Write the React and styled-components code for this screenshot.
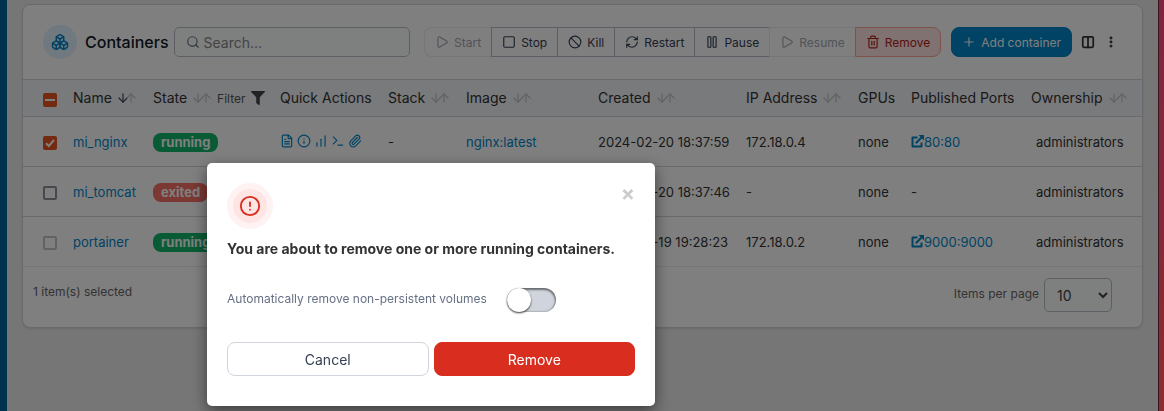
import React, { useState } from "react";
import styled, { createGlobalStyle, css } from "styled-components";
import {
  ArrowDown,
  ArrowUp,
  Ban,
  Boxes,
  ChartNoAxesColumnIncreasing,
  CircleAlert,
  Columns2,
  EllipsisVertical,
  FileText,
  Info,
  Paperclip,
  Pause,
  Play,
  Plus,
  RefreshCw,
  Search,
  Square,
  Terminal,
  Trash2,
} from "lucide-react";
import { FaFilter } from "react-icons/fa";

const GlobalStyle = createGlobalStyle`
  *, *::before, *::after { box-sizing: border-box; }
  body {
    margin: 0;
    background: #ececec;
    color: #333;
    font-family: Inter, "Liberation Sans", sans-serif;
    font-size: 13px;
    line-height: 20px;
  }
  button, input, select { font-family: inherit; }
  a { color: #0086c9; text-decoration: none; }
`;

const Page = styled.div`
  display: flex;
  min-height: 100vh;
`;

const Sidebar = styled.aside`
  flex: none;
  width: 7px;
  background: #006296;
`;

const Desktop = styled.div`
  position: relative;
  z-index: 2;
  flex: none;
  width: 6px;
  border-left: 1px solid #3c1420;
  background: linear-gradient(#7e2440, #8c2c30);
`;

const Main = styled.main`
  flex: 1;
  min-width: 0;
  padding: 4px 15px;
`;

const Card = styled.section`
  overflow: hidden;
  background: #fff;
  border: 1px solid #d0d5dd;
  border-radius: 8px;
  box-shadow: 0 1px 2px rgba(16, 24, 40, 0.1);
`;

const Toolbar = styled.header`
  display: flex;
  align-items: center;
  height: 74px;
  padding: 0 24px 0 20px;
`;

const TitleIcon = styled.span`
  display: flex;
  align-items: center;
  justify-content: center;
  width: 34px;
  height: 34px;
  margin-right: 8px;
  border-radius: 50%;
  background: #e0f2fe;
  color: #0086c9;
`;

const Title = styled.h1`
  margin: 0 5px 0 0;
  color: #101828;
  font-size: 16px;
  font-weight: 500;
`;

const SearchBox = styled.label`
  display: flex;
  flex: 1;
  align-items: center;
  gap: 4px;
  min-width: 0;
  height: 30px;
  padding: 0 11px;
  border: 1px solid #b8bec8;
  border-radius: 5px;
  background: #fcfffe;
  color: #667085;

  input {
    flex: 1;
    min-width: 0;
    padding: 0;
    border: 0;
    background: none;
    font-size: 14px;
    outline: 0;
  }
  input::placeholder { color: #888; opacity: 1; }
`;

const ButtonGroup = styled.div`
  display: flex;
  margin: 0 10px 0 14px;
`;

const Button = styled.button`
  display: flex;
  align-items: center;
  justify-content: center;
  gap: 5px;
  height: 30px;
  padding: 0 10px;
  border: 1px solid #d0d5dd;
  border-radius: 8px;
  background: #fff;
  color: #344054;
  font-size: 12px;
  white-space: nowrap;

  ${(p) => p.$tone === "primary" && css`
    border-color: #0086c9;
    background: #0086c9;
    color: #fff;
  `}
  ${(p) => p.$tone === "danger" && css`
    border-color: #fda29b;
    background: #fee4e2;
    color: #b42318;
  `}
`;

const GroupButton = styled(Button)`
  border-right-width: 0;
  border-radius: 0;
  border-color: ${(p) => (p.$tone ? "#fda29b" : p.disabled ? "#eaecf0" : "#b4bac6")};
  color: ${(p) => (p.$tone ? "#b42318" : p.disabled ? "#a3a8b2" : "#344054")};

  &:not(:disabled) + &:disabled { border-left-color: #b4bac6; }
  &:first-child { border-radius: 8px 0 0 8px; }
  &:last-child {
    border-right-width: 1px;
    border-radius: 0 8px 8px 0;
  }
`;

const IconButton = styled.button`
  display: flex;
  margin-left: 9px;
  padding: 0;
  border: 0;
  background: none;
  color: #333;
`;

const Table = styled.table`
  width: 100%;
  table-layout: fixed;
  border-collapse: collapse;

  th, td {
    padding: 0 0 0 10px;
    border-top: 1px solid #d0d5dd;
    text-align: left;
    vertical-align: middle;
    white-space: nowrap;
  }
  th:first-child, td:first-child { padding-left: 20px; }
  td:last-child { padding-left: 15px; }
  th {
    height: 37px;
    background: #f2f4f7;
    font-size: 14px;
    font-weight: 400;
  }
  td { height: 50px; }
  tbody { border-bottom: 1px solid #eaecf0; }
`;

const Head = styled.span`
  display: flex;
  align-items: center;
  gap: 4px;
`;

const SortArrows = styled.span`
  display: flex;
  color: #bfc2c8;

  svg + svg { margin-left: -6px; }
  svg:first-child { color: ${(p) => (p.$active ? "#344054" : "inherit")}; }
`;

const FilterButton = styled.button`
  display: flex;
  align-items: center;
  gap: 5px;
  padding: 0;
  border: 0;
  background: none;
  color: #555;
  font-size: 12px;

  svg { color: #444; }
`;

const Checkbox = styled.input`
  appearance: none;
  display: block;
  width: 14px;
  height: 14px;
  margin: 3px 0 0;
  border: 2px solid ${(p) => (p.disabled ? "#c4c4ca" : "#8f8f9d")};
  border-radius: 2px;
  background: center / 14px no-repeat;

  ${(p) => p.$mark && css`
    border: 0;
    background-color: #e95420;
    background-image: ${p.$mark === "dash"
      ? "linear-gradient(#fff, #fff)"
      : `url("data:image/svg+xml,%3Csvg xmlns='http://www.w3.org/2000/svg' viewBox='0 0 14 14'%3E%3Cpath d='M3 7.2l2.8 2.8L11 4' fill='none' stroke='white' stroke-width='2'/%3E%3C/svg%3E")`};
    background-size: ${p.$mark === "dash" ? "10px 2px" : "14px 14px"};
  `}
`;

const Badge = styled.span`
  display: inline-block;
  padding: 0 8px;
  border-radius: 8px;
  background: ${(p) => (p.$state === "running" ? "#12b76a" : "#f97066")};
  color: #fff;
  font-size: 13px;
  font-weight: 700;
  line-height: 19px;
`;

const QuickActions = styled.div`
  display: flex;
  gap: 3px;
  margin-bottom: 2px;

  a { display: flex; }
`;

const PortLink = styled.a`
  display: flex;
  align-items: center;
`;

const Footer = styled.footer`
  display: flex;
  align-items: flex-start;
  justify-content: space-between;
  height: 60px;
  padding: 11px 30px 0 10px;
  color: #666;
  font-size: 12px;
`;

const Selected = styled.span`
  padding-top: 4px;
`;

const PageSize = styled.label`
  display: flex;
  gap: 5px;
  line-height: 32px;

  select {
    width: 68px;
    height: 34px;
    padding: 0 0 0 8px;
    border: 1px solid #b8bec8;
    border-radius: 5px;
    background: #fcfffe;
    color: #444;
    font-size: 14px;
  }
`;

const Overlay = styled.div`
  position: fixed;
  inset: 0;
  z-index: 1;
  display: flex;
  align-items: flex-start;
  padding: 163px 0 0 207px;
  background: rgba(0, 0, 0, 0.5);
`;

const Dialog = styled.div`
  width: 448px;
  padding: 20px 20px 30px;
  border-radius: 5px;
  background: #fff;
  box-shadow: 0 5px 15px rgba(0, 0, 0, 0.5);
`;

const DialogTop = styled.div`
  display: flex;
  align-items: flex-start;
  justify-content: space-between;
`;

const AlertIcon = styled.span`
  display: flex;
  align-items: center;
  justify-content: center;
  width: 46px;
  height: 46px;
  border: 6px solid #fef3f2;
  border-radius: 50%;
  background: #fee4e2;
  color: #d92d20;
`;

const CloseButton = styled.button`
  padding: 0;
  border: 0;
  background: none;
  color: #ccc;
  font-size: 21px;
  font-weight: 700;
  line-height: 22px;
`;

const DialogTitle = styled.h2`
  margin: 10px 0 28px;
  font-size: 14px;
  font-weight: 700;
  line-height: 20px;
`;

const SwitchRow = styled.label`
  display: flex;
  align-items: center;
  gap: 20px;
  height: 24px;
  color: #667085;
  font-size: 12px;
`;

const Switch = styled.input`
  appearance: none;
  display: flex;
  width: 49px;
  height: 24px;
  margin: 2px 0 0;
  border-radius: 12px;
  background: #d0d5dd;
  box-shadow: inset 0 1px 2px 1px rgba(0, 0, 0, 0.5);

  &::before {
    content: "";
    width: 24px;
    height: 24px;
    margin-left: ${(p) => (p.checked ? "25px" : "0")};
    border-radius: 50%;
    background: #fff;
    box-shadow: 0 1px 2px rgba(0, 0, 0, 0.8);
  }
`;

const DialogActions = styled.div`
  display: grid;
  grid-template-columns: 1fr 1fr;
  gap: 5px;
  margin-top: 31px;
`;

const DialogButton = styled(Button)`
  height: 34px;
  font-size: 14px;
  ${(p) => p.$solid && css`
    border-color: #d92d20;
    background: #d92d20;
    color: #fff;
  `}
`;

const COLUMNS = [
  { width: 40 },
  { label: "Name", width: 80, sort: "active" },
  { label: "State", width: 127, sort: "idle", filter: true },
  { label: "Quick Actions", width: 108 },
  { label: "Stack", width: 78, sort: "idle" },
  { label: "Image", width: 132, sort: "idle" },
  { label: "Created", width: 148, sort: "idle" },
  { label: "IP Address", width: 112, sort: "idle" },
  { label: "GPUs", width: 53 },
  { label: "Published Ports", width: 120 },
  { label: "Ownership", sort: "idle" },
];

const ROWS = [
  { name: "mi_nginx", state: "running", stack: "-", image: "nginx:latest", created: "2024-02-20 18:37:59", ip: "172.18.0.4", port: "80:80", checked: true },
  { name: "mi_tomcat", state: "exited", created: "2024-02-20 18:37:46", ip: "-" },
  { name: "portainer", state: "running", created: "2024-02-19 19:28:23", ip: "172.18.0.2", port: "9000:9000", disabled: true },
];

const QUICK = [
  ["Logs", FileText],
  ["Inspect", Info],
  ["Stats", ChartNoAxesColumnIncreasing],
  ["Console", Terminal],
  ["Attach", Paperclip],
];

const ACTIONS = [
  { label: "Start", Icon: Play, disabled: true },
  { label: "Stop", Icon: Square },
  { label: "Kill", Icon: Ban },
  { label: "Restart", Icon: RefreshCw },
  { label: "Pause", Icon: Pause },
  { label: "Resume", Icon: Play, disabled: true },
  { label: "Remove", Icon: Trash2, tone: "danger" },
];

function Sort({ active }) {
  return (
    <SortArrows $active={active}>
      <ArrowDown size={14} />
      <ArrowUp size={14} />
    </SortArrows>
  );
}

function OpenPortIcon() {
  return (
    <svg width="13" height="13" viewBox="0 0 13 13" fill="none" stroke="currentColor" strokeWidth="2">
      <path d="M6.5 2.5H1.5v9h9V7.5" strokeLinejoin="round" />
      <path d="M4.8 8.2L10.5 2.5" />
      <path d="M7.5 0H13v5.5z" fill="currentColor" stroke="none" />
    </svg>
  );
}

function ContainerRow({ row }) {
  return (
    <tr>
      <td>
        <Checkbox
          type="checkbox"
          aria-label={`Select ${row.name}`}
          defaultChecked={row.checked}
          disabled={row.disabled}
          $mark={row.checked ? "tick" : undefined}
        />
      </td>
      <td><a href="#container">{row.name}</a></td>
      <td><Badge $state={row.state}>{row.state}</Badge></td>
      <td>
        <QuickActions>
          {QUICK.map(([label, Icon]) => (
            <a key={label} href="#action" aria-label={label}><Icon size={14} /></a>
          ))}
        </QuickActions>
      </td>
      <td>{row.stack}</td>
      <td>{row.image && <a href="#image">{row.image}</a>}</td>
      <td>{row.created}</td>
      <td>{row.ip}</td>
      <td>none</td>
      <td>
        {row.port ? <PortLink href="#port"><OpenPortIcon />{row.port}</PortLink> : "-"}
      </td>
      <td>administrators</td>
    </tr>
  );
}

export default function App() {
  const [removeVolumes, setRemoveVolumes] = useState(false);
  return (
    <>
      <GlobalStyle />
      <Page>
        <Sidebar />
        <Main>
          <Card>
            <Toolbar>
              <TitleIcon><Boxes size={18} /></TitleIcon>
              <Title>Containers</Title>
              <SearchBox>
                <Search size={14} />
                <input type="text" placeholder="Search..." aria-label="Search" />
              </SearchBox>
              <ButtonGroup>
                {ACTIONS.map(({ label, Icon, disabled, tone }) => (
                  <GroupButton key={label} type="button" disabled={disabled} $tone={tone}>
                    <Icon size={14} />
                    {label}
                  </GroupButton>
                ))}
              </ButtonGroup>
              <Button type="button" $tone="primary"><Plus size={14} />Add container</Button>
              <IconButton type="button" aria-label="Columns"><Columns2 size={14} strokeWidth={3} /></IconButton>
              <IconButton type="button" aria-label="Settings"><EllipsisVertical size={14} strokeWidth={3} /></IconButton>
            </Toolbar>
            <Table>
              <colgroup>
                {COLUMNS.map((c, i) => <col key={i} width={c.width} />)}
              </colgroup>
              <thead>
                <tr>
                  {COLUMNS.map((c, i) => (
                    <th key={i} scope="col">
                      {c.label ? (
                        <Head>
                          {c.label}
                          {c.sort && <Sort active={c.sort === "active"} />}
                          {c.filter && (
                            <FilterButton type="button">
                              Filter
                              <FaFilter size={14} />
                            </FilterButton>
                          )}
                        </Head>
                      ) : (
                        <Checkbox type="checkbox" aria-label="Select all" $mark="dash" />
                      )}
                    </th>
                  ))}
                </tr>
              </thead>
              <tbody>
                {ROWS.map((row) => <ContainerRow key={row.name} row={row} />)}
              </tbody>
            </Table>
            <Footer>
              <Selected>1 item(s) selected</Selected>
              <PageSize>
                Items per page
                <select defaultValue="10">
                  <option>10</option>
                  <option>25</option>
                  <option>50</option>
                </select>
              </PageSize>
            </Footer>
          </Card>
        </Main>
        <Desktop />
      </Page>
      <Overlay>
        <Dialog role="dialog" aria-modal="true" aria-labelledby="dialog-title">
          <DialogTop>
            <AlertIcon><CircleAlert size={22} /></AlertIcon>
            <CloseButton type="button" aria-label="Close">×</CloseButton>
          </DialogTop>
          <DialogTitle id="dialog-title">You are about to remove one or more running containers.</DialogTitle>
          <SwitchRow>
            Automatically remove non-persistent volumes
            <Switch
              type="checkbox"
              role="switch"
              checked={removeVolumes}
              onChange={(e) => setRemoveVolumes(e.target.checked)}
            />
          </SwitchRow>
          <DialogActions>
            <DialogButton type="button">Cancel</DialogButton>
            <DialogButton type="button" $solid>Remove</DialogButton>
          </DialogActions>
        </Dialog>
      </Overlay>
    </>
  );
}
